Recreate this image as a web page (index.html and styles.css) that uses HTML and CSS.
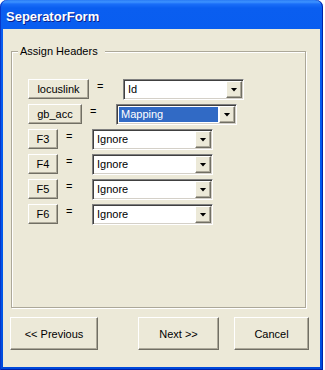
FILE: index.html
```html
<!DOCTYPE html>
<html lang="en">
<head>
    <meta charset="UTF-8">
    <title>SeperatorForm</title>
    <link rel="stylesheet" href="styles.css">
</head>
<body>

    <div class="window">
        <div class="titlebar">SeperatorForm</div>

        <div class="client">
            <fieldset class="group">
                <legend>Assign Headers</legend>

                <div class="row">
                    <button class="btn field-btn w-locus">locuslink</button>
                    <span class="eq">=</span>
                    <div class="combo">
                        <span class="combo-text">Id</span>
                        <span class="combo-arrow"><i></i></span>
                    </div>
                </div>
                <div class="row">
                    <button class="btn field-btn w-gb">gb_acc</button>
                    <span class="eq">=</span>
                    <div class="combo focused">
                        <span class="combo-text">Mapping</span>
                        <span class="combo-arrow"><i></i></span>
                    </div>
                </div>
                <div class="row">
                    <button class="btn field-btn w-f">F3</button>
                    <span class="eq">=</span>
                    <div class="combo">
                        <span class="combo-text">Ignore</span>
                        <span class="combo-arrow"><i></i></span>
                    </div>
                </div>
                <div class="row">
                    <button class="btn field-btn w-f">F4</button>
                    <span class="eq">=</span>
                    <div class="combo">
                        <span class="combo-text">Ignore</span>
                        <span class="combo-arrow"><i></i></span>
                    </div>
                </div>
                <div class="row">
                    <button class="btn field-btn w-f">F5</button>
                    <span class="eq">=</span>
                    <div class="combo">
                        <span class="combo-text">Ignore</span>
                        <span class="combo-arrow"><i></i></span>
                    </div>
                </div>
                <div class="row">
                    <button class="btn field-btn w-f">F6</button>
                    <span class="eq">=</span>
                    <div class="combo">
                        <span class="combo-text">Ignore</span>
                        <span class="combo-arrow"><i></i></span>
                    </div>
                </div>
            </fieldset>

            <div class="actions">
                <button class="btn nav-btn btn-prev">&lt;&lt; Previous</button>
                <button class="btn nav-btn btn-next">Next &gt;&gt;</button>
                <button class="btn nav-btn btn-cancel">Cancel</button>
            </div>
        </div>
    </div>

</body>
</html>
```

FILE: styles.css
```css
body {
    margin: 0;
    background: #fff;
    font-family: "Liberation Sans", Arial, sans-serif;
    font-size: 11px;
}
.window {
    width: 323px;
    height: 370px;
    box-sizing: border-box;
    border-radius: 7px 7px 0 0;
    background: linear-gradient(to bottom, #2a7bf5 0, #3d93ff 2px, #1a6ef8 4px, #0a5ef0 8px, #0058ee 50%, #0055e6 85%, #0049db 100%);
    padding: 0 3px 3px 3px;
    box-shadow: inset 1px 0 0 #0836c8, inset -1px 0 0 #0021a8, inset 0 -1px 0 #0021a8;
    display: flex;
    flex-direction: column;
}
.titlebar {
    height: 29px;
    box-sizing: border-box;
    padding: 9px 0 0 3px;
    line-height: 15px;
    font-size: 13px;
    font-weight: bold;
    color: #fff;
    text-shadow: 1px 1px 0 #0a1e8c;
}
.client {
    flex: 1;
    background: #ece9d8;
}
.group {
    box-sizing: border-box;
    width: 295px;
    height: 263px;
    margin: 16px 0 0 8px;
    padding: 21px 0 0 16px;
    border: 1px solid #aca899;
    box-shadow: 1px 1px 0 #fff, inset 1px 1px 0 #fff;
    display: flex;
    flex-direction: column;
    gap: 4px;
}
.group legend {
    margin-left: -10px;
    padding: 0 7px 0 2px;
    line-height: 13px;
    background: #ece9d8;
    color: #000;
}
.row {
    display: flex;
    align-items: flex-start;
    height: 21px;
}
.btn {
    font-family: "Liberation Sans", Arial, sans-serif;
    font-size: 11px;
    color: #000;
    background: #ece9d8;
    border: 1px solid;
    border-color: #fff #716f64 #716f64 #fff;
    box-shadow: inset -1px -1px 0 #aca899;
    padding: 0;
    margin: 0;
    box-sizing: border-box;
}
.field-btn {
    height: 20px;
    line-height: 18px;
}
.w-locus { width: 61px; }
.w-gb { width: 54px; }
.w-f { width: 30px; }
.eq {
    width: 34px;
    flex-shrink: 0;
    padding-left: 8px;
    box-sizing: border-box;
    line-height: 13px;
    margin-top: 1px;
}
.combo {
    width: 121px;
    height: 21px;
    box-sizing: border-box;
    border: 1px solid;
    border-color: #808080 #fff #fff #808080;
    box-shadow: inset 1px 1px 0 #404040, inset -1px -1px 0 #d4d0c8;
    background: #fff;
    padding: 1px;
    display: flex;
}
.combo-text {
    flex: 1;
    margin: 1px;
    padding-left: 2px;
    line-height: 15px;
}
.focused .combo-text {
    background: #316ac5;
    color: #fff;
}
.combo-arrow {
    width: 16px;
    box-sizing: border-box;
    background: #ece9d8;
    border: 1px solid;
    border-color: #fff #716f64 #716f64 #fff;
    box-shadow: inset -1px -1px 0 #aca899;
    display: flex;
    align-items: center;
    justify-content: center;
}
.combo-arrow i {
    width: 7px;
    height: 4px;
    background: #000;
    clip-path: polygon(0 0, 100% 0, 50% 100%);
}
.actions {
    display: flex;
    margin: 9px 0 0 7px;
}
.nav-btn {
    height: 33px;
}
.btn-prev { width: 88px; }
.btn-next { width: 81px; margin-left: 40px; }
.btn-cancel { width: 75px; margin-left: 15px; }
```
